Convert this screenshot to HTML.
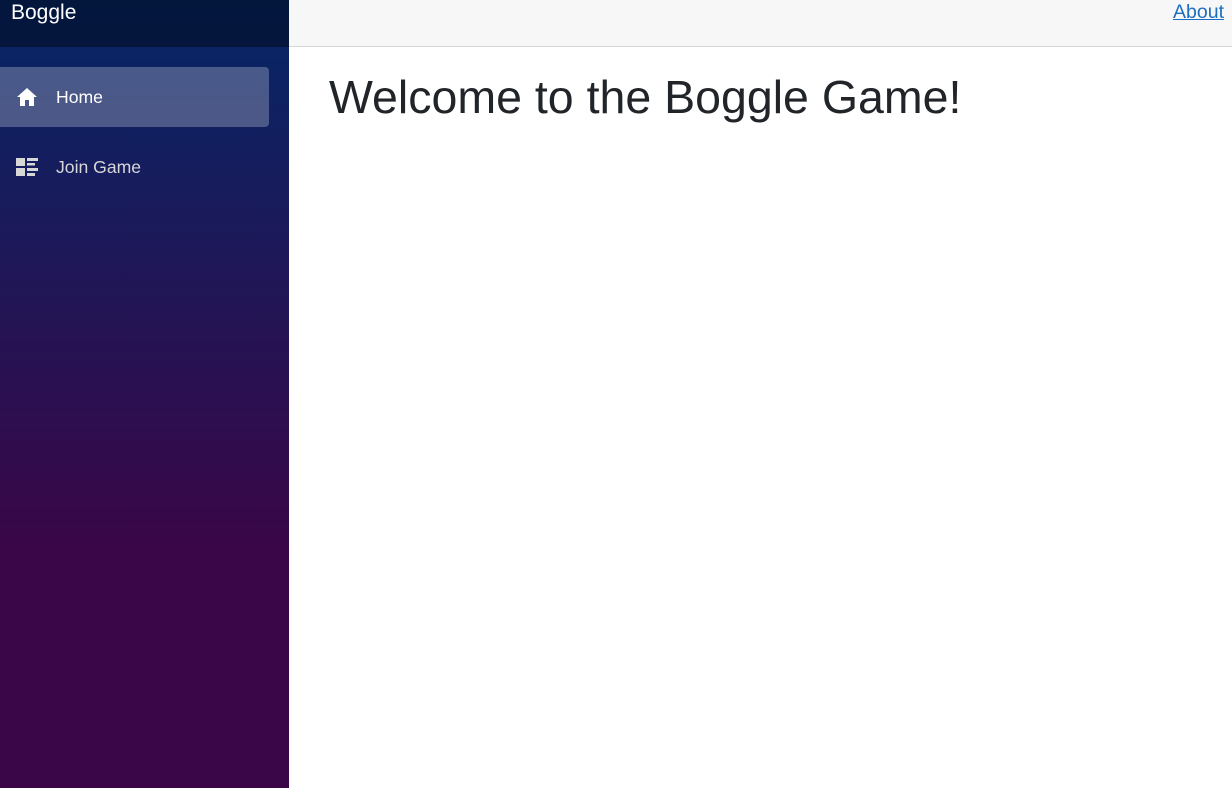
<!DOCTYPE html>
<html><head><meta charset="utf-8"><style>
*{box-sizing:border-box;margin:0;padding:0}
body{width:1232px;height:788px;overflow:hidden;font-family:"Liberation Sans",Arial,sans-serif;background:#fff;position:relative}
.side{position:absolute;left:0;top:0;width:289px;height:788px;background:linear-gradient(180deg,rgb(5,39,103) 0%,#3a0647 70%)}
.brand{height:47px;background:rgba(0,0,0,0.4);color:#fff;font-size:21px;padding-left:11px;padding-top:1px;line-height:24px}
.nav{position:absolute;left:0;width:269px;height:60px;border-radius:0 4px 4px 0;color:#d7d7d7;font-size:17.6px;display:flex;align-items:center}
.nav.active{background:rgba(255,255,255,0.25);color:#fff}
.nav svg{position:absolute;left:16px}
.nav span{position:absolute;left:56px}
.top{position:absolute;left:289px;top:0;right:0;height:47px;background:#f7f7f7;border-bottom:1px solid #d6d5d5}
.top a{position:absolute;right:8px;top:0;color:#1b6ec2;font-size:19.5px;text-decoration:underline;line-height:24px}
h1{position:absolute;left:329px;top:70px;font-size:46.5px;font-weight:400;color:#212529;line-height:54px}
</style></head><body>
<div class="side">
<div class="brand">Boggle</div>
<div class="nav active" style="top:67px"><svg width="22" height="20" viewBox="0 0 22 20"><path d="M11 1 L1 10 H4 V19 H9 V13 H13 V19 H18 V10 H21 Z" fill="#fff"/></svg><span>Home</span></div>
<div class="nav" style="top:137px"><svg width="22" height="20" viewBox="0 0 22 20"><g fill="#d7d7d7"><rect x="0" y="1" width="9" height="8"/><rect x="0" y="11" width="9" height="8"/><rect x="11" y="1" width="11" height="3"/><rect x="11" y="6" width="8" height="2.5"/><rect x="11" y="11" width="11" height="3"/><rect x="11" y="16" width="8" height="3"/></g></svg><span>Join Game</span></div>
</div>
<div class="top"><a>About</a></div>
<h1>Welcome to the Boggle Game!</h1>
</body></html>
